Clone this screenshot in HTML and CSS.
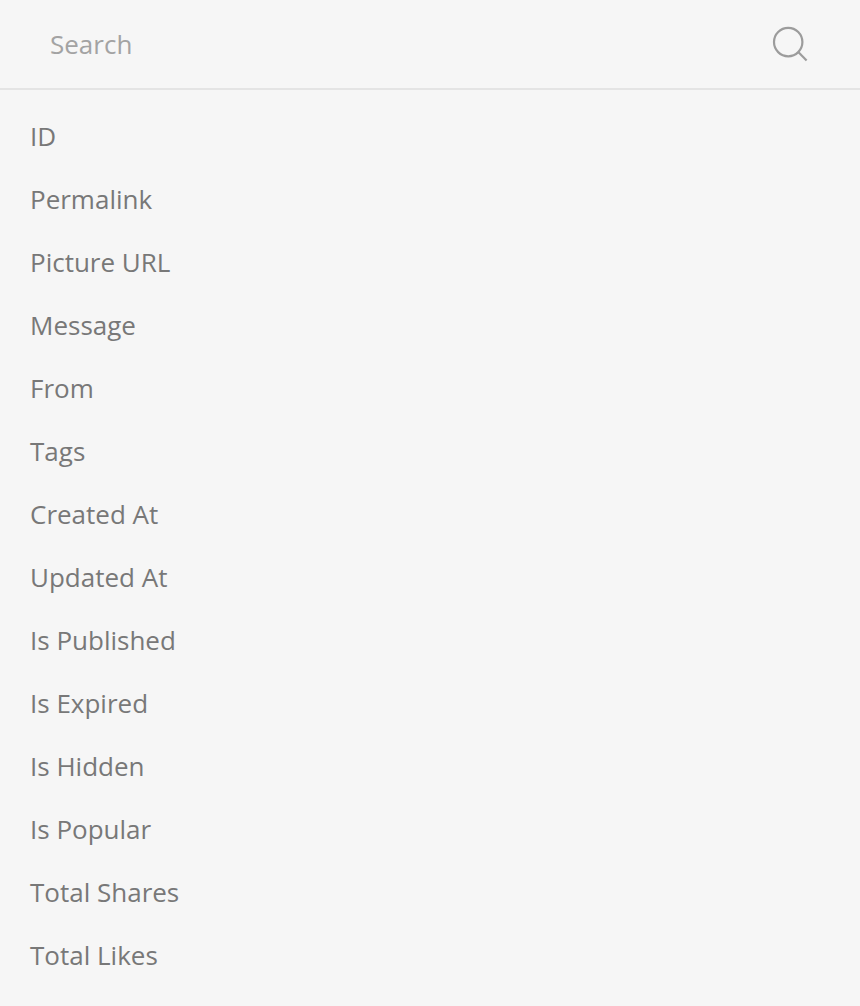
FILE: index.html
```html
<!DOCTYPE html>
<html lang="en">
<head>
<meta charset="utf-8">
<title>Fields</title>
<link rel="stylesheet" href="styles.css">
</head>
<body>
<div class="search">
<span class="search-label">Search</span>
<svg class="search-icon" width="36" height="36" viewBox="0 0 36 36" fill="none"><circle cx="16.2" cy="16.1" r="14.2"/><path d="M26 25.7L34.6 34.4"/></svg>
</div>
<ul class="fields">
<li>ID</li>
<li>Permalink</li>
<li>Picture URL</li>
<li>Message</li>
<li>From</li>
<li>Tags</li>
<li>Created At</li>
<li>Updated At</li>
<li>Is Published</li>
<li>Is Expired</li>
<li>Is Hidden</li>
<li>Is Popular</li>
<li>Total Shares</li>
<li>Total Likes</li>
</ul>
</body>
</html>
```
FILE: styles.css
```css
* { box-sizing: border-box; }
body {
  margin: 0;
  height: 1006px;
  overflow: hidden;
  background: #f6f6f6;
  color: #787878;
  font: 26px/63px "Open Sans", sans-serif;
}
.search {
  display: flex;
  justify-content: space-between;
  align-items: center;
  height: 90px;
  padding: 0 52px 0 50px;
  border-bottom: 2px solid #e4e4e4;
}
.search-label { color: #a3a3a3; }
.search-icon { stroke: #9c9c9c; stroke-width: 2.2; }
.fields {
  margin: 0;
  padding: 15px 30px 0;
  list-style: none;
}
.fields li { height: 63px; }
```
